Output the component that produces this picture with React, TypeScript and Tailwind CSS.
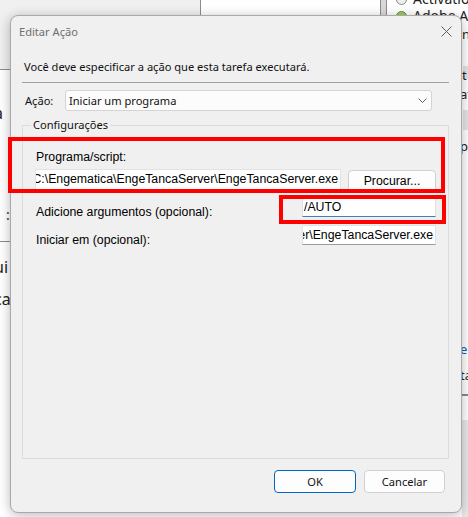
const ui = "font-['Noto_Sans',sans-serif] text-[11.1px]";
const classic = "font-['Liberation_Sans',Arial,sans-serif] text-[12.3px]";

function Backdrop() {
  return (
    <>
      <div className="absolute left-0 top-0 h-[70px] w-[201px] border-b border-r border-[#8c8c8c] bg-[#f0f0f0]" />
      <div className="absolute left-0 top-[241px] h-px w-[12px] bg-[#8c8c8c]" />
      <div className="absolute left-[380px] top-0 h-[40px] w-[7px] border-l border-r border-[#8c8c8c] bg-[#d8d8d8]" />
      <div className="absolute left-[-6px] top-[104px] font-['Noto_Sans',sans-serif] text-[16px] leading-[18px] text-[#222]">a</div>
      <div className="absolute left-[6px] top-[206px] font-['Noto_Sans',sans-serif] text-[14px] leading-[18px] text-[#333]">:</div>
      <div className="absolute left-[-6px] top-[258px] font-['Noto_Sans',sans-serif] text-[16px] leading-[18px] text-[#222]">ui</div>
      <div className="absolute left-[-6px] top-[290px] font-['Noto_Sans',sans-serif] text-[16px] leading-[18px] text-[#222]">ca</div>

      <div className="absolute left-[396px] top-[-9px] flex items-center gap-[6px] whitespace-nowrap font-['Noto_Sans',sans-serif] text-[14px] leading-[16px] text-[#222]">
        <span className="h-[11px] w-[11px] shrink-0 rounded-full border border-[#888] bg-[#eee]" />
        Activation
      </div>
      <div className="absolute left-[396px] top-[8px] flex items-center gap-[6px] whitespace-nowrap font-['Noto_Sans',sans-serif] text-[14px] leading-[16px] text-[#222]">
        <span className="h-[11px] w-[11px] shrink-0 rounded-full border border-[#6a8a3a] bg-[#9ccc5a]" />
        Adobe Acr
      </div>
      <div className="absolute left-[463px] top-[66px] h-[13px] w-[6px] bg-[#e4e4e4]" />
      <div className="absolute left-[463px] top-[110px] h-[20px] w-[6px] bg-[#e4e4e4]" />
      <div className="absolute left-[462px] top-[26px] font-['Noto_Sans',sans-serif] text-[13px] leading-[16px] text-[#222]">nt</div>
      <div className="absolute left-[462px] top-[67px] font-['Noto_Sans',sans-serif] text-[13px] leading-[16px] text-[#222]">t</div>
      <div className="absolute left-[460px] top-[86px] font-['Noto_Sans',sans-serif] text-[13px] leading-[16px] text-[#222]">at</div>
      <div className="absolute left-[460px] top-[138px] font-['Noto_Sans',sans-serif] text-[13px] leading-[16px] text-[#222]">pa</div>
      <div className="absolute left-[460px] top-[341px] font-['Noto_Sans',sans-serif] text-[13px] leading-[16px] text-[#0a5ab0]">e</div>
      <div className="absolute left-[460px] top-[367px] font-['Noto_Sans',sans-serif] text-[13px] leading-[16px] text-[#222]">ta</div>
      <div className="absolute left-[462px] top-[394px] h-[2px] w-[8px] bg-[#888]" />
      <div className="absolute left-[462px] top-[420px] h-[100px] w-[8px] bg-[#e8e8e8]" />
    </>
  );
}

function TextBox({ value, className }: { value: string; className: string }) {
  return (
    <div
      className={`flex items-center justify-end overflow-hidden whitespace-nowrap border border-[#e2e2e2] border-b-[#9a9a9a] bg-white pr-[2px] text-black ${classic} ${className}`}
    >
      <span className="shrink-0">{value}</span>
    </div>
  );
}

function Dialog() {
  return (
    <div className={`absolute left-[10px] top-[15px] flex h-[498px] w-[452px] flex-col rounded-[8px] border border-[#a9a9a9] bg-[#f0f0f0] shadow-[0_2px_12px_rgba(0,0,0,0.28)] ${ui}`}>
      <div className="flex h-[31px] items-center justify-between pl-[8px] pr-[9px]">
        <span className="leading-[16px] text-[#6f6f6f]">Editar Ação</span>
        <svg width="11" height="11" viewBox="0 0 11 11">
          <path d="M0.5 0.5L10.5 10.5M10.5 0.5L0.5 10.5" stroke="#5f5f5f" strokeWidth="1" />
        </svg>
      </div>

      <div className="mt-[12px] pl-[13px] leading-[16px] text-[#111]">
        Você deve especificar a ação que esta tarefa executará.
      </div>
      <div className="ml-[11px] mr-[12px] mt-[7px] h-px bg-[#a0a0a0]" />

      <div className="ml-[14px] mt-[7px] flex items-center">
        <span className="w-[40px] leading-[16px] text-[#111]">Ação:</span>
        <div className="flex h-[21px] w-[367px] items-center justify-between rounded-[3px] border border-[#d4d4d4] bg-[#fcfcfc] pl-[3px] pr-[4px]">
          <span className="leading-[16px] text-[#111]">Iniciar um programa</span>
          <svg width="9" height="5" viewBox="0 0 9 5">
            <path d="M0.5 0.5L4.5 4.5L8.5 0.5" fill="none" stroke="#606060" strokeWidth="1" />
          </svg>
        </div>
      </div>

      <fieldset className="ml-[11px] mr-[12px] mt-[6px] h-[342px] border border-[#dcdcdc] pl-[13px] pr-[12px]">
        <legend className="ml-[-5px] px-[2px] leading-[16px] text-[#111]">Configurações</legend>

        <div className={`mt-[17px] leading-[15px] text-black ${classic}`}>Programa/script:</div>
        <div className="mt-[4px] flex items-start">
          <TextBox value="C:\Engematica\EngeTancaServer\EngeTancaServer.exe" className="ml-[-1px] h-[21px] w-[306px]" />
          <button className={`ml-[7px] mt-[1px] h-[23px] w-[88px] rounded-[4px] border border-[#d0d0d0] bg-[#fdfdfd] leading-[15px] text-black ${classic}`}>
            Procurar...
          </button>
        </div>

        <div className="mt-[4px] flex h-[20px] items-start justify-between">
          <span className={`pt-[8px] leading-[15px] text-black ${classic}`}>Adicione argumentos (opcional):</span>
          <div className="flex h-[20px] w-[134px] items-center overflow-hidden border border-[#e2e2e2] border-b-[#3f7fc4] bg-white pl-px">
            <span className={`text-black ${classic}`}>/AUTO</span>
          </div>
        </div>

        <div className="mt-[8px] flex h-[20px] items-start justify-between">
          <span className={`pt-[8px] leading-[15px] text-black ${classic}`}>Iniciar em (opcional):</span>
          <TextBox value="C:\Engematica\EngeTancaServer\EngeTancaServer.exe" className="h-[20px] w-[134px]" />
        </div>
      </fieldset>

      <div className="mr-[16px] mt-[11px] flex justify-end gap-[8px]">
        <button className="h-[23px] w-[82px] rounded-[4px] border border-[#0067c0] bg-[#fdfdfd] leading-[16px] text-[#111]">OK</button>
        <button className="h-[23px] w-[81px] rounded-[4px] border border-[#d0d0d0] bg-[#fdfdfd] leading-[16px] text-[#111]">Cancelar</button>
      </div>
    </div>
  );
}

export default function App() {
  return (
    <div className="relative h-[517px] w-[468px] overflow-hidden bg-white">
      <Backdrop />
      <Dialog />
      <div className="absolute left-[8px] top-[137px] h-[56px] w-[437px] border-4 border-[#ff0000]" />
      <div className="absolute left-[279px] top-[195px] h-[29px] w-[167px] border-4 border-[#ff0000]" />
    </div>
  );
}
